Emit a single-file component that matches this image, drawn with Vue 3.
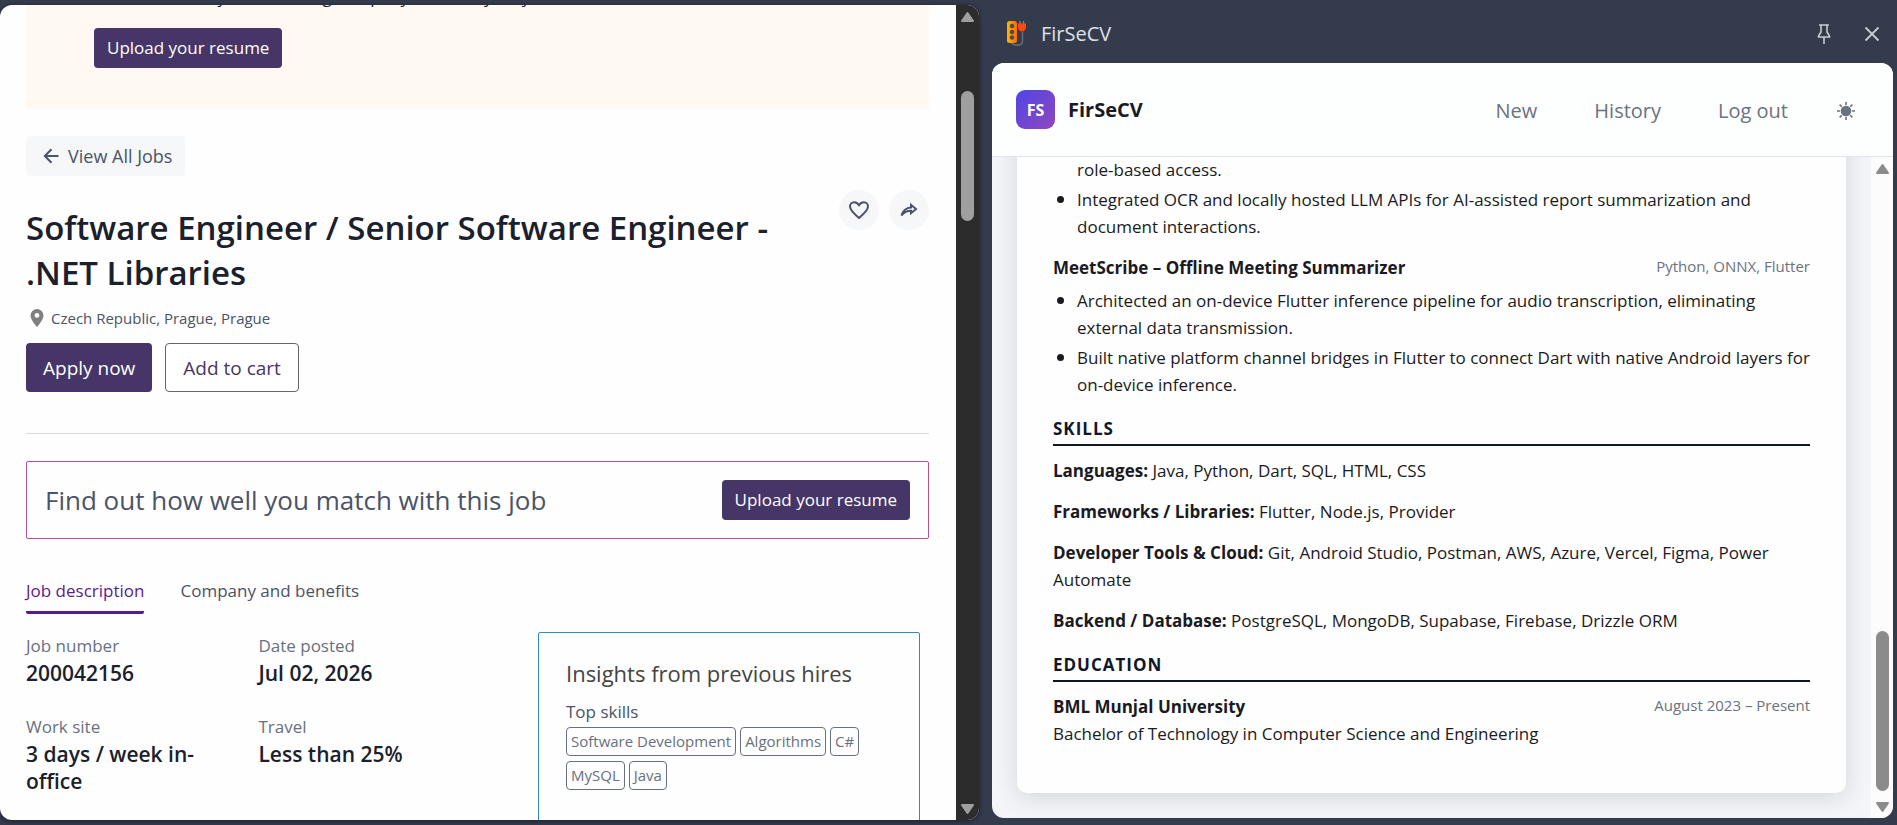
<template>
  <div class="shell">
    <main class="window">
      <div class="page">
        <section class="banner">
          <p class="banner-text">Find out where your matching company team may vary</p>
          <button type="button" class="btn btn-primary">Upload your resume</button>
        </section>

        <a href="#" class="back-link">
          <svg width="16" height="16" viewBox="0 0 16 16" fill="none" stroke="currentColor" stroke-width="2">
            <path d="M15.5 8H2M8.5 1.2L1.8 8l6.7 6.8" />
          </svg>
          View All Jobs
        </a>

        <div class="title-row">
          <h1>Software Engineer / Senior Software Engineer - .NET Libraries</h1>
          <div class="title-actions">
            <button type="button" class="round-btn" aria-label="Save job">
              <svg width="22" height="20" viewBox="0 0 22 20" fill="none" stroke="currentColor" stroke-width="2">
                <path d="M11 18C5.500 13.300 2 10 2 6.500 2 4 3.800 2.200 6.200 2.200c2 0 3.700 1.200 4.800 3 1.100-1.800 2.800-3 4.800-3C18.200 2.200 20 4 20 6.500c0 3.500-3.500 6.800-9 11.500z" />
              </svg>
            </button>
            <button type="button" class="round-btn" aria-label="Share job">
              <svg width="18" height="16" viewBox="0 0 18 16" fill="none" stroke="currentColor" stroke-width="2" stroke-linejoin="miter">
                <path d="M1.500 13.500C3 8.500 6.500 5.600 11 5.400V2.800L16 7l-5 4.200V8.800C7 8.800 4 10.300 1.500 13.500z" />
              </svg>
            </button>
          </div>
        </div>

        <p class="location">
          <svg width="14" height="20" viewBox="0 0 14 20">
            <path fill="#808080" fill-rule="evenodd" d="M7 1a6.500 6.500 0 0 0-6.500 6.500C.5 12 7 19 7 19s6.500-7 6.500-11.500A6.500 6.500 0 0 0 7 1zm0 4a2.400 2.400 0 1 1 0 4.800A2.400 2.400 0 0 1 7 5z" />
          </svg>
          Czech Republic, Prague, Prague
        </p>

        <div class="cta-row">
          <button type="button" class="btn btn-large btn-primary">Apply now</button>
          <button type="button" class="btn btn-large btn-outline">Add to cart</button>
        </div>

        <hr class="divider" />

        <section class="match-box">
          <h2>Find out how well you match with this job</h2>
          <button type="button" class="btn btn-primary">Upload your resume</button>
        </section>

        <nav class="tabs">
          <a
            v-for="tab in tabs"
            :key="tab"
            href="#"
            class="tab"
            :class="{ active: tab === activeTab }"
            @click.prevent="activeTab = tab"
          >{{ tab }}</a>
        </nav>

        <div class="details">
          <dl class="facts">
            <div v-for="fact in facts" :key="fact.label" class="fact">
              <dt>{{ fact.label }}</dt>
              <dd>{{ fact.value }}</dd>
            </div>
          </dl>
          <aside class="insights">
            <h3>Insights from previous hires</h3>
            <h4>Top skills</h4>
            <ul class="tags">
              <li v-for="skill in topSkills" :key="skill">{{ skill }}</li>
            </ul>
          </aside>
        </div>
      </div>

      <div class="scrollbar dark">
        <svg width="15" height="12" viewBox="0 0 15 12"><path d="M7.500 2L13 10H2z" /></svg>
        <div class="track"><div class="thumb thumb-top"></div></div>
        <svg width="15" height="12" viewBox="0 0 15 12"><path d="M7.500 10L13 2H2z" /></svg>
      </div>
    </main>

    <aside class="side">
      <div class="side-bar">
        <svg class="app-icon" width="20" height="25" viewBox="0 0 20 25">
          <defs>
            <linearGradient id="strip" x1="0" y1="0" x2="1" y2="0">
              <stop offset="0" stop-color="#fcb900" />
              <stop offset="1" stop-color="#ff6a00" />
            </linearGradient>
          </defs>
          <path d="M6 21.500c0 2.500 2 2.500 5 2.500h1.500c3 0 4-1 4-4v-9" fill="none" stroke="#6b7076" stroke-width="1.400" />
          <rect x="1" y="0" width="10" height="22" rx="2.500" fill="url(#strip)" />
          <circle cx="6" cy="5" r="2.200" fill="#4a4a52" />
          <circle cx="6" cy="11" r="2.200" fill="#4a4a52" />
          <circle cx="6" cy="16.500" r="2.200" fill="#4a4a52" />
          <path d="M14 0v3M17.500 0v3" stroke="#7d8288" stroke-width="1.400" />
          <path d="M12 2.500h8v3.500c0 2.500-1.600 4.500-4 4.500s-4-2-4-4.500z" fill="#ff4a0c" />
        </svg>
        <span class="side-title">FirSeCV</span>
        <button type="button" class="bar-btn" aria-label="Pin">
          <svg width="14" height="20" viewBox="0 0 14 20" fill="none" stroke="currentColor" stroke-width="1.600">
            <path d="M2 1h10M4 1v7L1.500 12v1h11v-1L10 8V1M7 13v7" />
          </svg>
        </button>
        <button type="button" class="bar-btn" aria-label="Close">
          <svg width="16" height="16" viewBox="0 0 16 16" fill="none" stroke="currentColor" stroke-width="1.800">
            <path d="M1.500 1.500l13 13M14.500 1.500l-13 13" />
          </svg>
        </button>
      </div>

      <div class="panel">
        <header class="panel-header">
          <span class="logo">FS</span>
          <span class="brand">FirSeCV</span>
          <nav class="panel-nav">
            <a href="#">New</a>
            <a href="#">History</a>
            <a href="#">Log out</a>
            <button type="button" class="theme-btn" aria-label="Toggle theme">
              <svg width="18" height="18" viewBox="0 0 18 18" stroke="currentColor" stroke-width="1.600">
                <circle cx="9" cy="9" r="4.500" fill="currentColor" />
                <path d="M9 0v3M9 15v3M0 9h3M15 9h3M2.600 2.600l2.200 2.200M13.200 13.200l2.200 2.200M15.400 2.600l-2.200 2.200M4.800 13.200l-2.200 2.200" />
              </svg>
            </button>
          </nav>
        </header>

        <div class="panel-body">
          <div class="scroll-area">
            <article class="resume">
              <ul class="bullets">
                <li class="continued">role-based access.</li>
                <li v-for="line in reportTool" :key="line">{{ line }}</li>
              </ul>

              <div class="entry-head">
                <strong>MeetScribe – Offline Meeting Summarizer</strong>
                <span>Python, ONNX, Flutter</span>
              </div>
              <ul class="bullets">
                <li v-for="line in meetScribe" :key="line">{{ line }}</li>
              </ul>

              <h2>SKILLS</h2>
              <p v-for="group in skillGroups" :key="group.name" class="skill">
                <strong>{{ group.name }}:</strong> {{ group.items }}
              </p>

              <h2>EDUCATION</h2>
              <div class="entry-head flush">
                <strong>BML Munjal University</strong>
                <span>August 2023 – Present</span>
              </div>
              <p>Bachelor of Technology in Computer Science and Engineering</p>
            </article>
          </div>

          <div class="scrollbar light">
            <svg width="15" height="12" viewBox="0 0 15 12"><path d="M7.500 2L13 10H2z" /></svg>
            <div class="track"><div class="thumb thumb-bottom"></div></div>
            <svg width="15" height="12" viewBox="0 0 15 12"><path d="M7.500 10L13 2H2z" /></svg>
          </div>
        </div>
      </div>
    </aside>
  </div>
</template>

<script setup>
import { ref } from 'vue'

const tabs = ['Job description', 'Company and benefits']
const activeTab = ref('Job description')

const facts = [
  { label: 'Job number', value: '200042156' },
  { label: 'Date posted', value: 'Jul 02, 2026' },
  { label: 'Work site', value: '3 days / week in-office' },
  { label: 'Travel', value: 'Less than 25%' },
]

const topSkills = ['Software Development', 'Algorithms', 'C#', 'MySQL', 'Java']

// bullets keep the line breaks of the resume itself
const reportTool = [
  'Integrated OCR and locally hosted LLM APIs for AI-assisted report summarization and\ndocument interactions.',
]

const meetScribe = [
  'Architected an on-device Flutter inference pipeline for audio transcription, eliminating\nexternal data transmission.',
  'Built native platform channel bridges in Flutter to connect Dart with native Android layers for\non-device inference.',
]

const skillGroups = [
  { name: 'Languages', items: 'Java, Python, Dart, SQL, HTML, CSS' },
  { name: 'Frameworks / Libraries', items: 'Flutter, Node.js, Provider' },
  { name: 'Developer Tools & Cloud', items: 'Git, Android Studio, Postman, AWS, Azure, Vercel, Figma, Power Automate' },
  { name: 'Backend / Database', items: 'PostgreSQL, MongoDB, Supabase, Firebase, Drizzle ORM' },
]
</script>

<style>
body {
  margin: 0;
  background: #333b4d;
}
</style>

<style scoped>
.shell {
  display: grid;
  grid-template-columns: minmax(0, 979fr) minmax(0, 901fr);
  gap: 13px;
  height: 100vh;
  padding-right: 4px;
  box-sizing: border-box;
  overflow: hidden;
  background: #333b4d;
  font-family: "Open Sans", "Noto Sans", sans-serif;
  font-size: 17px;
  line-height: 24px;
  color: #1a202c;
}

.shell * {
  box-sizing: border-box;
}

h1, h2, h3, h4, p, ul, dl, dd {
  margin: 0;
  padding: 0;
}

ul {
  list-style: none;
}

a {
  color: inherit;
  text-decoration: none;
}

button {
  font: inherit;
  border: 0;
  cursor: pointer;
}

svg {
  flex-shrink: 0;
}

/* job window */
.window {
  display: flex;
  min-height: 0;
  margin: 5px 0;
  border-radius: 12px;
  overflow: hidden;
  background: #fefefe;
  box-shadow: 0 1px 4px 1px rgba(0, 0, 0, 0.35);
}

.page {
  flex: 1;
  min-width: 0;
  padding: 0 27px 0 26px;
  overflow: hidden;
}

.banner {
  margin-top: -20px;
  padding: 0 68px 41px;
  background: #fff8f3;
}

.banner-text {
  margin-bottom: 19px;
}

.btn {
  height: 40px;
  padding: 0 13px;
  border-radius: 4px;
  white-space: nowrap;
}

.btn-primary {
  background: #463567;
  color: #fff;
}

.btn-large {
  height: 49px;
  padding: 0 17px;
  font-size: 19px;
}

.btn-outline {
  border: 1px solid #666;
  background: #fff;
  color: #463567;
}

.back-link {
  display: inline-flex;
  align-items: center;
  gap: 9px;
  height: 40px;
  margin-top: 27px;
  padding: 0 13px 0 17px;
  border-radius: 4px;
  background: #f6f7f9;
  color: #4b5366;
  font-size: 18px;
}

.title-row {
  display: flex;
  gap: 24px;
  margin-top: 14px;
}

h1 {
  flex: 1;
  padding-top: 15px;
  font-size: 33px;
  line-height: 45px;
  font-weight: 600;
}

.title-actions {
  display: flex;
  gap: 10px;
}

.round-btn {
  display: flex;
  align-items: center;
  justify-content: center;
  width: 40px;
  height: 40px;
  padding: 0;
  border-radius: 50%;
  background: #f6f7f9;
  color: #4b5366;
}

.location {
  display: flex;
  align-items: center;
  gap: 7px;
  margin-top: 11px;
  padding-left: 4px;
  font-size: 15px;
  color: #4b5366;
}

.cta-row {
  display: flex;
  gap: 13px;
  margin-top: 13px;
}

.divider {
  height: 1px;
  margin: 41px 0 27px;
  border: 0;
  background: #dcdcdc;
}

.match-box {
  display: flex;
  align-items: center;
  justify-content: space-between;
  height: 78px;
  padding: 0 18px;
  border: 1px solid #b9508f;
  border-radius: 2px;
}

.match-box h2 {
  font-size: 26px;
  line-height: 36px;
  font-weight: 400;
  color: #4b5366;
}

.tabs {
  display: flex;
  gap: 36px;
  margin-top: 40px;
}

.tab {
  padding-bottom: 8px;
  border-bottom: 3px solid transparent;
  color: #4b5366;
}

.tab.active {
  border-color: #5c1a8b;
  border-radius: 2px;
  color: #5c1a8b;
}

.details {
  display: flex;
  justify-content: space-between;
  margin-top: 18px;
  padding-right: 9px;
}

.facts {
  display: grid;
  grid-template-columns: 1fr 1fr;
  align-content: start;
  gap: 26px 0;
  width: 52%;
}

.fact {
  padding-right: 40px;
  line-height: 27px;
}

.fact dt {
  color: #697080;
}

.fact dd {
  margin-top: 1px;
  font-size: 21px;
  font-weight: 600;
}

.insights {
  width: 382px;
  min-height: 240px;
  padding: 25px 27px;
  border: 1px solid #2a8dcb;
  border-radius: 2px;
}

.insights h3 {
  font-size: 22px;
  line-height: 30px;
  font-weight: 400;
  color: #444;
}

.insights h4 {
  margin-top: 12px;
  font-size: 17px;
  font-weight: 400;
  color: #4b5366;
}

.tags {
  display: flex;
  flex-wrap: wrap;
  gap: 5px 4px;
  margin-top: 3px;
}

.tags li {
  padding: 0 4px;
  border: 1px solid #697080;
  border-radius: 4px;
  font-size: 15px;
  line-height: 27px;
  color: #697080;
}

/* scrollbars */
.scrollbar {
  display: flex;
  flex-direction: column;
  align-items: center;
  flex-shrink: 0;
  width: 22px;
  padding: 6px 0 5px;
}

.scrollbar path {
  fill: currentColor;
  stroke: currentColor;
  stroke-width: 2;
  stroke-linejoin: round;
}

.track {
  display: flex;
  flex-direction: column;
  flex: 1;
  width: 13px;
}

.thumb {
  border-radius: 7px;
  background: currentColor;
}

.dark {
  width: 23px;
  background: #2c2c2c;
  color: #9f9f9f;
}

.light {
  background: #fcfcfc;
  color: #8b8b8b;
}

.thumb-top {
  height: 130px;
  margin-top: 68px;
}

.thumb-bottom {
  height: 160px;
  margin: auto 0 10px;
}

/* side panel */
.side {
  display: flex;
  flex-direction: column;
  min-height: 0;
  padding-bottom: 7px;
}

.side-bar {
  display: flex;
  align-items: center;
  height: 63px;
  padding: 4px 9px 0 14px;
  color: #dfe1e6;
}

.side-title {
  flex: 1;
  margin-left: 15px;
  font-size: 20px;
}

.bar-btn {
  display: flex;
  align-items: center;
  justify-content: center;
  width: 24px;
  height: 24px;
  margin-left: 24px;
  padding: 0;
  background: none;
  color: #c9ccd3;
}

.panel {
  display: flex;
  flex-direction: column;
  flex: 1;
  min-height: 0;
  border-radius: 12px;
  overflow: hidden;
  background: #f4f5f8;
}

.panel-header {
  display: flex;
  align-items: center;
  flex-shrink: 0;
  height: 94px;
  padding: 0 38px 0 24px;
  border-bottom: 1px solid #e3e4e9;
  background: #fdfefe;
}

.logo {
  display: flex;
  align-items: center;
  justify-content: center;
  width: 39px;
  height: 39px;
  border-radius: 9px;
  background: linear-gradient(135deg, #4f46e5, #9146bd);
  color: #fff;
  font-size: 16px;
  font-weight: 700;
}

.brand {
  margin-left: 13px;
  font-size: 20px;
  font-weight: 700;
  color: #1a1a22;
}

.panel-nav {
  display: flex;
  align-items: center;
  gap: 57px;
  margin-left: auto;
  padding-top: 3px;
  font-size: 20px;
  color: #6b7280;
}

.theme-btn {
  display: flex;
  margin-left: -8px;
  padding: 0;
  background: none;
  color: #6b7280;
}

.panel-body {
  display: flex;
  flex: 1;
  min-height: 0;
}

/* scrolled to the end, so the resume hangs from its bottom edge */
.scroll-area {
  display: flex;
  flex-direction: column;
  justify-content: flex-end;
  flex: 1;
  min-width: 0;
  padding: 0 25px;
  overflow: hidden;
}

.resume {
  flex-shrink: 0;
  margin-bottom: 25px;
  padding: 36px 36px 46px;
  border-radius: 10px;
  background: #fefefe;
  box-shadow: 0 4px 24px rgba(15, 23, 42, 0.14);
  line-height: 27px;
  color: #1a1a22;
}

.resume strong {
  font-weight: 700;
}

.bullets li {
  position: relative;
  margin-bottom: 3px;
  padding-left: 24px;
  white-space: pre;
}

.bullets li:last-child {
  margin-bottom: 0;
}

.bullets li::before {
  content: "";
  position: absolute;
  left: 4px;
  top: 10px;
  width: 7px;
  height: 7px;
  border-radius: 50%;
  background: #1a1a22;
}

.bullets .continued::before {
  display: none;
}

.entry-head {
  display: flex;
  justify-content: space-between;
  margin: 14px 0 6px;
}

.entry-head.flush {
  margin: 0;
}

.entry-head span {
  font-size: 15px;
  line-height: 24px;
  color: #6b7280;
}

.resume h2 {
  margin: 17px 0 11px;
  padding-bottom: 2px;
  border-bottom: 2px solid #0f172a;
  font-size: 17px;
  line-height: 27px;
  font-weight: 700;
  letter-spacing: 1px;
  color: #0f172a;
}

.skill + .skill {
  margin-top: 14px;
}
</style>
